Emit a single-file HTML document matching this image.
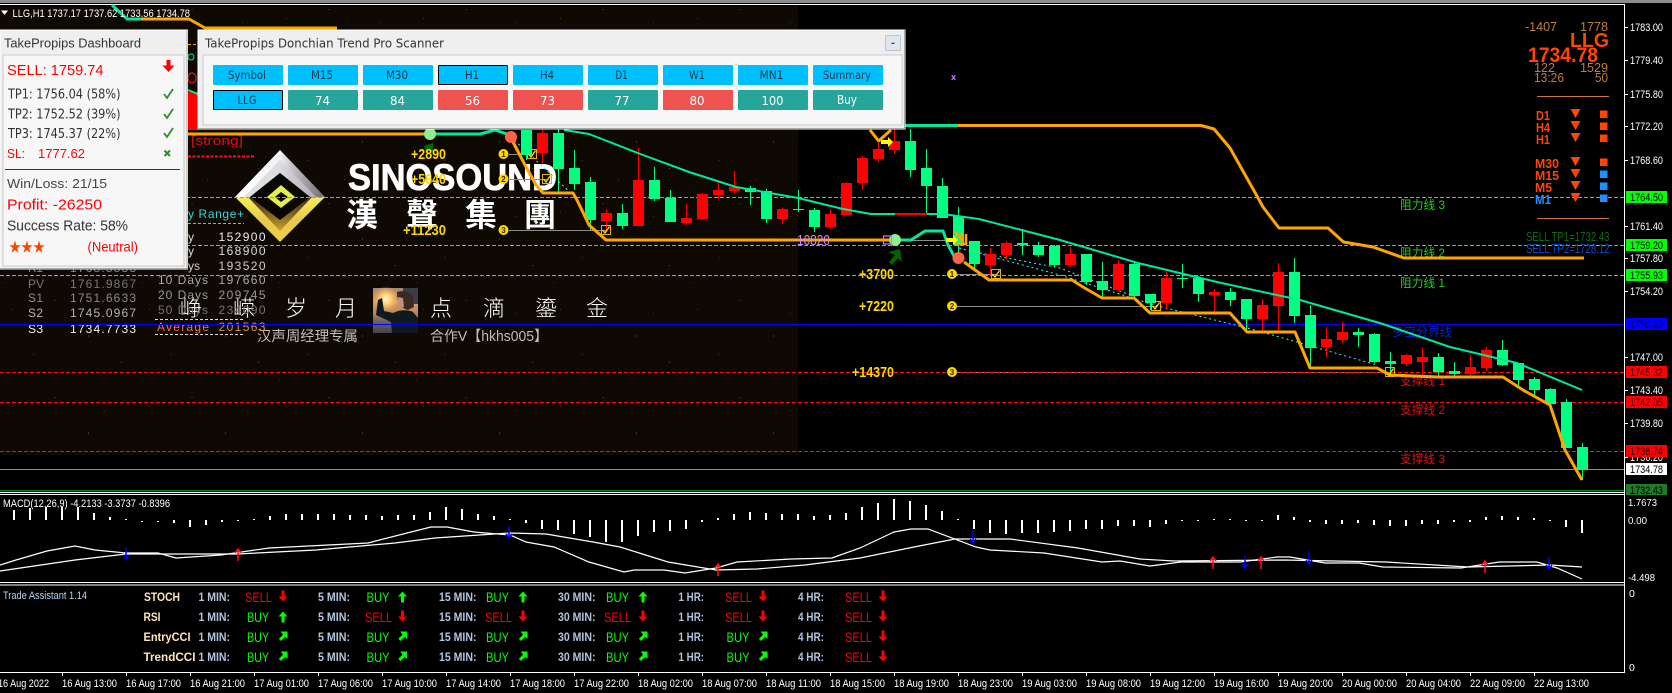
<!DOCTYPE html>
<html><head><meta charset="utf-8"><style>
html,body{margin:0;padding:0;background:#000;width:1672px;height:693px;overflow:hidden}
svg{display:block}
text{font-family:"Liberation Sans","Noto Sans CJK SC",sans-serif}
.d{font-family:"DejaVu Sans","Liberation Sans",sans-serif}
.ax{font-size:11px;fill:#fff}
.lb{font-size:11px;fill:#000}
.info{font-size:13px;fill:#bd7f3c}
.tf{font-size:13px;font-weight:bold;fill:#ff4500}
.y{font-size:15px;font-weight:bold;fill:#ffd700}
.ta{font-size:11.5px;font-weight:bold;fill:#b0c4de}
.nm{font-size:11.5px;font-weight:bold;fill:#ffe4b5}
.gv{font-size:13.5px;fill:#00ff00}
.rv{font-size:13.5px;fill:#ff0000}
.t{font-size:11px;fill:#fff}
.btn{font-size:11.5px;fill:#123a4a}
.num{font-size:12.5px;fill:#fff}
.pn{font-size:13px;fill:#333}
.tb{font-size:12px}
.cn{font-family:"Liberation Sans","Noto Sans CJK SC",sans-serif;font-size:12px}
.bg{font-family:"Noto Sans CJK SC",sans-serif;font-size:22px;fill:#fff;font-weight:300}
.cir{font-size:8px;font-weight:bold;fill:#3a2c00}
</style></head><body>
<svg xmlns="http://www.w3.org/2000/svg" width="1672" height="693" viewBox="0 0 1672 693">
<defs>
<pattern id="sp" width="137" height="97" patternUnits="userSpaceOnUse">
<rect x="12" y="18" width="1" height="1" fill="#4a3a24"/><rect x="54" y="9" width="2" height="1" fill="#33281a"/><rect x="88" y="44" width="1" height="2" fill="#3d3020"/><rect x="121" y="71" width="1" height="1" fill="#5a4a30"/><rect x="33" y="63" width="2" height="1" fill="#2e2416"/><rect x="70" y="82" width="1" height="1" fill="#4a3a24"/><rect x="105" y="22" width="1" height="1" fill="#3a2e1c"/><rect x="5" y="88" width="1" height="1" fill="#33281a"/>
</pattern>
<linearGradient id="up" x1="0" y1="0" x2="1" y2="0"><stop offset="0" stop-color="#fff"/><stop offset=".5" stop-color="#f2f2f4"/><stop offset=".62" stop-color="#c8c6cc"/><stop offset="1" stop-color="#6d6a70"/></linearGradient>
<linearGradient id="lo" x1="0" y1="0" x2="0" y2="1"><stop offset="0" stop-color="#f6ef55"/><stop offset=".5" stop-color="#e8c850"/><stop offset="1" stop-color="#f0d040"/></linearGradient>
<linearGradient id="lo2" x1="0" y1="0" x2="0" y2="1"><stop offset="0" stop-color="#3a2a10"/><stop offset="1" stop-color="#c89c30"/></linearGradient>
<linearGradient id="ph" x1="0" y1="0" x2="0" y2="1"><stop offset="0" stop-color="#a08870"/><stop offset=".3" stop-color="#d8a060"/><stop offset=".55" stop-color="#b88858"/><stop offset=".75" stop-color="#6a6060"/><stop offset="1" stop-color="#44444e"/></linearGradient>
<radialGradient id="sun"><stop offset="0" stop-color="#fff8d8"/><stop offset=".4" stop-color="#ffd070"/><stop offset="1" stop-color="#ffa850" stop-opacity="0"/></radialGradient>
<path id="au" d="M0-5.500L4.500-.5H1.500V5.500H-1.500V-.5H-4.500Z"/>
<path id="ad" d="M0 5.500L4.500 .5H1.500V-5.500H-1.500V.5H-4.500Z"/>
<path id="ane" d="M4.500-4.500V3L2.300 1-2 5-4.200 2.800 0-1.300-2.300-4.500Z"/>
<path id="ck" d="M-3.500 0L-1 3 3.500-3.500" fill="none" stroke="#ffe000" stroke-width="1.3"/>
</defs>

<rect width="1672" height="693" fill="#000"/>
<!-- background photo panel -->
<rect x="0" y="5" width="798" height="450" fill="#0f0903"/>
<rect x="0" y="5" width="798" height="450" fill="url(#sp)"/>
<!-- top frame -->
<rect x="0" y="0" width="1672" height="3" fill="#8c8c8c"/>
<rect x="0" y="4" width="1625" height="1" fill="#fff"/>
<rect x="1624" y="4" width="1" height="669" fill="#fff"/>

<!-- logo -->
<polygon points="280,150 325,197 310,197 280,173 250,197 235,197" fill="url(#up)"/>
<polygon points="280,160 316,197 310,197 280,173 250,197 244,197" fill="#cfcdd2" opacity=".6"/>
<polygon points="235,197 280,242 325,197 310,197 280,220 250,197" fill="url(#lo)"/>
<polygon points="248,197 280,231 312,197 310,197 280,220 250,197" fill="url(#lo2)"/>
<polygon points="280,173 310,197 280,220 250,197" fill="#090703"/>
<polygon points="281,185 295,197 281,208 267,197" fill="#e0f050"/>
<polygon points="281,192 288,197 281,202 275,197" fill="#0b0904"/>
<text x="348" y="190" font-size="37" font-weight="bold" fill="#fff" stroke="#fff" stroke-width=".7" textLength="209" lengthAdjust="spacingAndGlyphs" style="font-family:'Liberation Sans',sans-serif">SINOSOUND</text>
<g font-size="32" font-weight="bold" fill="#fff" text-anchor="middle">
<text x="362" y="226" style="font-family:'Noto Sans CJK TC',sans-serif">漢</text>
<text x="422" y="226" style="font-family:'Noto Sans CJK TC',sans-serif">聲</text>
<text x="481" y="226" style="font-family:'Noto Sans CJK TC',sans-serif">集</text>
<text x="540" y="226" style="font-family:'Noto Sans CJK TC',sans-serif">團</text>
</g>
<g text-anchor="middle">
<text class="bg" x="191" y="316">峥</text><text class="bg" x="244" y="316">嵘</text><text class="bg" x="296" y="316">岁</text><text class="bg" x="346" y="316">月</text>
<text class="bg" x="441" y="316">点</text><text class="bg" x="494" y="316">滴</text><text class="bg" x="546" y="316">鎏</text><text class="bg" x="597" y="316">金</text>
</g>
<text x="257" y="341" font-size="14.4" fill="#bdbdbd" textLength="101" lengthAdjust="spacingAndGlyphs">汉声周经理专属</text>
<text x="430" y="341" font-size="14.4" fill="#bdbdbd" textLength="118" lengthAdjust="spacingAndGlyphs">合作V【hkhs005】</text>
<!-- photo -->
<rect x="373" y="288" width="45" height="45" fill="url(#ph)"/>
<rect x="403" y="288" width="15" height="16" fill="#3c3c48"/>
<circle cx="386" cy="299" r="13" fill="url(#sun)"/>
<path d="M418 333H392L391 322 376 315 378 300 382 298 384 311 393 313 398 311C402 310 410 310 413 312L418 318Z" fill="#101820"/>
<path d="M397 292C402 290 411 291 413 297L414 307 408 310C403 309 399 304 397 299Z" fill="#3a2a24"/>
<path d="M397 297L403 298 404 307 398 306Z" fill="#c09080"/>

<!-- left tables -->
<g class="d tb">
<text x="28" y="288" fill="#777" textLength="16">PV</text><text x="70" y="288" fill="#777" textLength="66">1761.9867</text>
<text x="28" y="302" fill="#8a8a8a" textLength="15">S1</text><text x="70" y="302" fill="#8a8a8a" textLength="66">1751.6633</text>
<text x="28" y="317" fill="#b4b4b4" textLength="15">S2</text><text x="70" y="317" fill="#b4b4b4" textLength="66">1745.0967</text>
<text x="28" y="333" fill="#f0f0f0" textLength="15">S3</text><text x="70" y="333" fill="#f0f0f0" textLength="66">1734.7733</text>
<text x="28" y="272" fill="#888" textLength="15">R1</text><text x="70" y="272" fill="#888" textLength="66">1768.5533</text>
<text x="188" y="218" fill="#30d8d8" textLength="56">y Range+</text>
<text x="188" y="241" fill="#ddd" textLength="8">y</text><text x="218.5" y="241" fill="#eee" textLength="47">152900</text>
<text x="188" y="255" fill="#ddd" textLength="8">y</text><text x="218.5" y="255" fill="#ddd" textLength="47">168900</text>
<text x="188" y="270" fill="#ccc" textLength="12">ys</text><text x="218.5" y="270" fill="#ccc" textLength="47">193520</text>
<text x="158" y="284" fill="#aaa" textLength="50">10 Days</text><text x="218.5" y="284" fill="#aaa" textLength="47">197660</text>
<text x="158" y="299" fill="#999" textLength="50">20 Days</text><text x="218.5" y="299" fill="#999" textLength="47">209745</text>
<text x="158" y="314" fill="#777" textLength="50">50 Days</text><text x="218.5" y="314" fill="#777" textLength="47">234090</text>
<text x="157" y="331" fill="#ff7030" textLength="52">Average</text><text x="218.5" y="331" fill="#e09030" textLength="47">201563</text>
</g>
<path d="M188 223.5H244" stroke="#30d8d8" stroke-dasharray="3 2"/>
<path d="M155 319.5H243M155 334.5H243" stroke="#ddd" stroke-dasharray="3 2"/>

<!-- gray connector lines -->
<path d="M509 154.5H532M509 179.5H547M509 230.5H606M895 240.5H946M957 274.5H996M957 306.5H1156M957 372.5H1390" stroke="#8c8c8c" fill="none" shape-rendering="crispEdges"/>

<!-- horizontal levels -->
<g shape-rendering="crispEdges" fill="none">
<path d="M0 197.5H1624M0 245.5H1624M0 275.5H1624" stroke="#22ee22" stroke-dasharray="4 2"/>
<path d="M0 372.5H1624M0 402.5H1624M0 451.5H1624" stroke="#ff1010" stroke-dasharray="4 2"/>
<path d="M0 324.5H1624" stroke="#0000ff"/>
<path d="M0 469.5H1624" stroke="#8c8c8c"/>
<path d="M0 490.5H1624" stroke="#0a8a20"/>
<path d="M0 492.5H1624M0 494.5H1624M0 582.5H1624M0 585H1624M0 672.5H1625" stroke="#fff"/>
<path d="M188 156.5H255" stroke="#ff1010" stroke-width="2" stroke-dasharray="3 1.5"/>
</g>

<!-- level names -->
<g class="cn">
<text x="1400" y="209" fill="#1fd01f" textLength="45" lengthAdjust="spacingAndGlyphs">阻力线 3</text>
<text x="1400" y="257" fill="#1fd01f" textLength="45" lengthAdjust="spacingAndGlyphs">阻力线 2</text>
<text x="1400" y="287" fill="#1fd01f" textLength="45" lengthAdjust="spacingAndGlyphs">阻力线 1</text>
<text x="1392" y="336" fill="#0a20e0" textLength="60" lengthAdjust="spacingAndGlyphs">多空分界线</text>
<text x="1400" y="385" fill="#e01010" textLength="45" lengthAdjust="spacingAndGlyphs">支撑线 1</text>
<text x="1400" y="414" fill="#e01010" textLength="45" lengthAdjust="spacingAndGlyphs">支撑线 2</text>
<text x="1400" y="463" fill="#e01010" textLength="45" lengthAdjust="spacingAndGlyphs">支撑线 3</text>
</g>

<!-- cyan dashed -->
<path d="M511 137L575 197M959 248L1060 275 1154 305 1255 330 1377 365" fill="none" stroke="#40f0f0" stroke-dasharray="2 3"/>
<path d="M975 252L1060 268 1130 295" fill="none" stroke="#40f0f0" stroke-dasharray="2 3"/>

<!-- candles -->
<g shape-rendering="crispEdges">
<path fill="none" stroke="#00ff80" d="M526.5 130V160M558.5 129V192M574.5 150V190M590.5 177V230M622.5 204V229M654.5 167V201M670.5 190V222M750.5 186V205M766.5 189V223M798.5 190V212M814.5 208V232M910.5 129V177M926.5 149V213M942.5 178V218M958.5 207V255M974.5 241V270M1022.5 229V255M1038.5 242V257M1054.5 245V267M1086.5 254V285M1102.5 262V297M1134.5 263V298M1150.5 294V310M1182.5 264V288M1198.5 276V302M1230.5 288V306M1246.5 299V330M1294.5 258V323M1310.5 305V368M1358.5 328V347M1374.5 333V363M1390.5 352V377M1438.5 353V376M1454.5 362V376M1502.5 340V366M1518.5 363V386M1534.5 377V395M1550.5 388V404M1566.5 399V448M1582.5 443V480"/>
<path fill="#00ff80" d="M521 130h11V155h-11zM553 133h11V169h-11zM569 168h11V184h-11zM585 182h11V220h-11zM617 213h11V226h-11zM649 180h11V199h-11zM665 198h11V222h-11zM745 188h11V192h-11zM761 191h11V219h-11zM793 209h11V210h-11zM809 210h11V227h-11zM905 141h11V170h-11zM921 168h11V186h-11zM937 186h11V218h-11zM953 216h11V245h-11zM969 241h11V264h-11zM1017 243h11V245h-11zM1033 245h11V255h-11zM1049 246h11V265h-11zM1081 254h11V282h-11zM1097 281h11V290h-11zM1129 264h11V296h-11zM1145 294h11V303h-11zM1177 278h11V279h-11zM1193 278h11V294h-11zM1225 292h11V300h-11zM1241 299h11V319h-11zM1289 272h11V316h-11zM1305 315h11V348h-11zM1353 332h11V335h-11zM1369 334h11V362h-11zM1385 361h11V364h-11zM1433 357h11V372h-11zM1449 371h11V374h-11zM1497 350h11V365h-11zM1513 363h11V380h-11zM1529 379h11V390h-11zM1545 389h11V404h-11zM1561 402h11V448h-11zM1577 447h11V470h-11z"/>
<path fill="none" stroke="#ff0000" d="M542.5 129V163M606.5 209V230M638.5 148V226M686.5 204V225M702.5 193V219M718.5 181V199M734.5 171V193M782.5 208V224M830.5 209V229M846.5 182V215M862.5 156V190M878.5 143V162M894.5 129V154M990.5 248V275M1006.5 241V260M1070.5 247V267M1118.5 260V291M1166.5 271V310M1214.5 289V312M1262.5 299V331M1278.5 263V331M1326.5 327V357M1342.5 322V343M1406.5 354V366M1422.5 348V375M1470.5 355V376M1486.5 347V371"/>
<path fill="#ff0000" d="M187 92h11V130h-11zM537 133h11V153h-11zM601 213h11V221h-11zM633 180h11V226h-11zM681 218h11V223h-11zM697 194h11V219h-11zM713 190h11V195h-11zM729 187h11V191h-11zM777 209h11V219h-11zM825 214h11V227h-11zM841 183h11V215h-11zM857 158h11V183h-11zM873 149h11V159h-11zM889 141h11V150h-11zM985 254h11V265h-11zM1001 243h11V255h-11zM1065 254h11V265h-11zM1113 264h11V290h-11zM1161 278h11V303h-11zM1209 292h11V295h-11zM1257 305h11V319h-11zM1273 272h11V306h-11zM1321 339h11V347h-11zM1337 332h11V340h-11zM1401 355h11V364h-11zM1417 357h11V362h-11zM1465 367h11V374h-11zM1481 350h11V368h-11z"/>
</g>

<!-- trend teal -->
<g fill="none" stroke-linejoin="round">
<path d="M564 130L589 134 643 155 689 172 736 187 798 198 843 209 871 214H895" stroke="#00e89c" stroke-width="2"/>
<path d="M895 214H927" stroke="#ff0000" stroke-width="2"/>
<path d="M927 214H943L979 219 1060 240 1138 263 1217 282 1300 300 1383 324 1450 347 1517 363 1582 390" stroke="#00e89c" stroke-width="2"/>
<path d="M112 5L127 19H141" stroke="#00e89c" stroke-width="3"/>
<path d="M430 134H480L495 130 507 134" stroke="#00e89c" stroke-width="3"/>
<path d="M895 240H911L925 231H943L948 245 955 258" stroke="#00e89c" stroke-width="3"/>
<path d="M905 125.5H958" stroke="#00e89c" stroke-width="3"/>
<!-- orange -->
<path d="M141 19H189L205 28H337" stroke="#ffa500" stroke-width="3"/>
<path d="M188 134H430" stroke="#ffa500" stroke-width="3"/>
<path d="M512 140L525 165 536 185 543 193H573L577 200 589 225 606 240H889" stroke="#ffa500" stroke-width="3"/>
<path d="M870 130L878.6 141 891 130" stroke="#ffa500" stroke-width="3"/>
<path d="M964 262L989 280H1072L1083 287 1102 298H1134L1150 313H1230L1247 332H1295L1310 368H1377L1390 375 1413 376 1437 377H1503L1523 390 1550 405 1565 450 1582 480" stroke="#ffa500" stroke-width="3"/>
<path d="M958 125.5H1201L1214 129 1230 148 1257.5 197 1263 207 1279 228H1328L1343.5 242 1373 247 1404 258H1584" stroke="#ffa500" stroke-width="3"/>
</g>

<!-- markers -->
<circle cx="430" cy="134" r="6" fill="#90ee90"/>
<path d="M424 146L433 143V152L430 149 426 153Z" fill="#006400"/>
<circle cx="511" cy="137" r="6" fill="#ff6347"/>
<circle cx="895" cy="240" r="6" fill="#90ee90"/>
<rect x="883.5" y="236" width="8" height="8" fill="none" stroke="#d070ff" stroke-width="1.2"/>
<path d="M888 252L900 249 902 262 898 258 892 265 889 262 895 255Z" fill="#006400"/>
<circle cx="958.5" cy="258" r="6" fill="#ff6347"/>
<path d="M881 140H888V137L893 142 888 147V144H881Z" fill="#ffff00"/>
<path d="M946 238H953V235L958 240 953 245V242H946Z" fill="#ffff00"/>
<path d="M955 232L962 240 961 233M955 244H966V234" fill="none" stroke="#ffa500" stroke-width="2.5"/>
<text x="951" y="80" font-size="9" font-weight="bold" fill="#d080ff">x</text>
<!-- gold circles -->
<g fill="#ffd700">
<circle cx="503.5" cy="154" r="5"/><circle cx="503.5" cy="179" r="5"/><circle cx="503.5" cy="230" r="5"/>
<circle cx="952" cy="274" r="5"/><circle cx="952" cy="306" r="5"/><circle cx="952" cy="372" r="5"/>
</g>
<g text-anchor="middle">
<text class="cir" x="503.5" y="157">1</text><text class="cir" x="503.5" y="182">2</text><text class="cir" x="503.5" y="233">3</text>
<text class="cir" x="952" y="277">1</text><text class="cir" x="952" y="309">2</text><text class="cir" x="952" y="375">3</text>
</g>
<!-- check boxes -->
<g fill="none" stroke="#e8b000" stroke-width="1">
<rect x="527.5" y="149.5" width="9" height="9"/><rect x="542.5" y="174.5" width="9" height="9"/><rect x="601.5" y="225.5" width="9" height="9"/><rect x="991.5" y="269.5" width="9" height="9"/><rect x="1151.5" y="301.5" width="9" height="9"/><rect x="1385.5" y="367.5" width="9" height="9"/>
</g>
<use href="#ck" x="532" y="154"/><use href="#ck" x="547" y="179"/><use href="#ck" x="606" y="230"/><use href="#ck" x="996" y="274"/><use href="#ck" x="1156" y="306"/><use href="#ck" x="1390" y="372"/>

<!-- profit labels -->
<g class="y">
<text x="411" y="159" textLength="35" lengthAdjust="spacingAndGlyphs">+2890</text>
<text x="411" y="184" textLength="35" lengthAdjust="spacingAndGlyphs">+5640</text>
<text x="403" y="235" textLength="43" lengthAdjust="spacingAndGlyphs">+11230</text>
<text x="859" y="279" textLength="35" lengthAdjust="spacingAndGlyphs">+3700</text>
<text x="859" y="311" textLength="35" lengthAdjust="spacingAndGlyphs">+7220</text>
<text x="852" y="377" textLength="42" lengthAdjust="spacingAndGlyphs">+14370</text>
</g>
<text x="793" y="245" font-size="15" fill="#d088ff" textLength="37" lengthAdjust="spacingAndGlyphs">-10820</text>
<text x="191" y="145" font-size="13" fill="#d81010" textLength="52" lengthAdjust="spacingAndGlyphs">[strong]</text>
<path d="M188 44.5H198" stroke="#ffa500" stroke-dasharray="3 2"/>
<circle cx="191" cy="57" r="3" fill="none" stroke="#00e89c"/>
<ellipse cx="192" cy="78" rx="4" ry="5" fill="none" stroke="#ff2020"/>
<path d="M188 90L198 94" stroke="#00e89c" stroke-width="2"/>

<!-- top status -->
<path d="M1 10.5H8L4.5 15Z" fill="#fff"/>
<text x="12.5" y="17" class="t" textLength="177.5" lengthAdjust="spacingAndGlyphs">LLG,H1  1737.17 1737.62 1733.56 1734.78</text>

<!-- right info -->
<g class="info">
<text x="1525" y="31" textLength="32" lengthAdjust="spacingAndGlyphs">-1407</text>
<text x="1580" y="31" textLength="28" lengthAdjust="spacingAndGlyphs">1778</text>
<text x="1534" y="72" textLength="21" lengthAdjust="spacingAndGlyphs">122</text>
<text x="1580" y="72" textLength="28" lengthAdjust="spacingAndGlyphs">1529</text>
<text x="1534" y="82" textLength="30" lengthAdjust="spacingAndGlyphs">13:26</text>
<text x="1595" y="82" textLength="13" lengthAdjust="spacingAndGlyphs">50</text>
</g>
<text x="1570" y="47" font-size="20" font-weight="bold" fill="#ff4500" textLength="39" lengthAdjust="spacingAndGlyphs">LLG</text>
<text x="1528" y="62" font-size="21" font-weight="bold" fill="#ff4500" textLength="70" lengthAdjust="spacingAndGlyphs">1734.78</text>
<path d="M1537 96.5H1609M1537 218.5H1609" stroke="#c8743c" shape-rendering="crispEdges"/>
<g class="tf">
<text x="1536" y="120" textLength="14" lengthAdjust="spacingAndGlyphs">D1</text>
<text x="1536" y="132" textLength="14" lengthAdjust="spacingAndGlyphs">H4</text>
<text x="1536" y="144" textLength="14" lengthAdjust="spacingAndGlyphs">H1</text>
<text x="1535" y="168" textLength="24" lengthAdjust="spacingAndGlyphs">M30</text>
<text x="1535" y="180" textLength="24" lengthAdjust="spacingAndGlyphs">M15</text>
<text x="1535" y="192" textLength="17" lengthAdjust="spacingAndGlyphs">M5</text>
<text x="1535" y="204" textLength="16" lengthAdjust="spacingAndGlyphs" style="fill:#1e90ff">M1</text>
</g>
<path fill="#ff4500" d="M1570.5 109h10l-5 9zM1570.5 121h10l-5 9zM1570.5 133h10l-5 9zM1570.5 157h10l-5 9zM1570.5 169h10l-5 9zM1570.5 181h10l-5 9zM1570.5 193h10l-5 9z"/>
<path fill="#ff4500" d="M1600 110.5h7.5v7.5h-7.5zM1600 122.5h7.5v7.5h-7.5zM1600 134.5h7.5v7.5h-7.5zM1600 158.5h7.5v7.5h-7.5z"/>
<path fill="#1e90ff" d="M1600 170.5h7.5v7.5h-7.5zM1600 182.5h7.5v7.5h-7.5zM1600 194.5h7.5v7.5h-7.5z"/>
<text x="1526" y="241" font-size="13" fill="#0d6a14" textLength="83.5" lengthAdjust="spacingAndGlyphs">SELL TP1=1732.43</text>
<text x="1526" y="253" font-size="13" fill="#0c4ac8" textLength="83.5" lengthAdjust="spacingAndGlyphs">SELL TP2=1728.12</text>

<!-- price axis -->
<path stroke="#fff" shape-rendering="crispEdges" d="M1625 27.5h3M1625 60.5h3M1625 94.5h3M1625 126.5h3M1625 160.5h3M1625 226.5h3M1625 258.5h3M1625 291.5h3M1625 357.5h3M1625 390.5h3M1625 423.5h3M1625 457.5h3"/>
<g class="ax">
<text x="1630" y="31" textLength="33" lengthAdjust="spacingAndGlyphs">1783.00</text>
<text x="1630" y="64" textLength="33" lengthAdjust="spacingAndGlyphs">1779.40</text>
<text x="1630" y="98" textLength="33" lengthAdjust="spacingAndGlyphs">1775.80</text>
<text x="1630" y="130" textLength="33" lengthAdjust="spacingAndGlyphs">1772.20</text>
<text x="1630" y="164" textLength="33" lengthAdjust="spacingAndGlyphs">1768.60</text>
<text x="1630" y="230" textLength="33" lengthAdjust="spacingAndGlyphs">1761.40</text>
<text x="1630" y="262" textLength="33" lengthAdjust="spacingAndGlyphs">1757.80</text>
<text x="1630" y="295" textLength="33" lengthAdjust="spacingAndGlyphs">1754.20</text>
<text x="1630" y="361" textLength="33" lengthAdjust="spacingAndGlyphs">1747.00</text>
<text x="1630" y="394" textLength="33" lengthAdjust="spacingAndGlyphs">1743.40</text>
<text x="1630" y="427" textLength="33" lengthAdjust="spacingAndGlyphs">1739.80</text>
<text x="1630" y="461" textLength="33" lengthAdjust="spacingAndGlyphs">1736.20</text>
</g>
<g shape-rendering="crispEdges">
<rect x="1626" y="191" width="41" height="12" fill="#00ff00"/>
<rect x="1626" y="239" width="41" height="12" fill="#00ff00"/>
<rect x="1626" y="269" width="41" height="12" fill="#00ff00"/>
<rect x="1626" y="318" width="41" height="12" fill="#0000ff"/>
<rect x="1626" y="366" width="41" height="12" fill="#ff0000"/>
<rect x="1626" y="396" width="41" height="12" fill="#ff0000"/>
<rect x="1626" y="445" width="41" height="12" fill="#ff0000"/>
<rect x="1626" y="463" width="41" height="12" fill="#fff"/>
<rect x="1626" y="484" width="41" height="11" fill="#1f7a2a"/>
</g>
<g class="lb">
<text x="1630" y="201" textLength="33" lengthAdjust="spacingAndGlyphs">1764.50</text>
<text x="1630" y="249" textLength="33" lengthAdjust="spacingAndGlyphs">1759.20</text>
<text x="1630" y="279" textLength="33" lengthAdjust="spacingAndGlyphs">1755.93</text>
<text x="1630" y="328" textLength="33" lengthAdjust="spacingAndGlyphs" style="fill:#000040">1750.62</text>
<text x="1630" y="376" textLength="33" lengthAdjust="spacingAndGlyphs" style="fill:#200000">1745.32</text>
<text x="1630" y="406" textLength="33" lengthAdjust="spacingAndGlyphs" style="fill:#200000">1742.05</text>
<text x="1630" y="455" textLength="33" lengthAdjust="spacingAndGlyphs" style="fill:#200000">1736.74</text>
<text x="1630" y="473" textLength="33" lengthAdjust="spacingAndGlyphs">1734.78</text>
<text x="1630" y="494" textLength="33" lengthAdjust="spacingAndGlyphs">1732.43</text>
</g>

<!-- MACD -->
<text x="3" y="507" class="t" textLength="167" lengthAdjust="spacingAndGlyphs">MACD(12,26,9) -4.2133 -3.3737 -0.8396</text>
<path stroke="#fff" stroke-width="2" fill="none" shape-rendering="crispEdges" d="M14 520V510M30 520V508M46 520V507M62 520V507M78 520V507M94 520V513M110 520V517M126 520V519M142 521V522M158 521V522M174 520V523M190 520V527M206 520V525M222 520V522M238 520V521M254 520V519M270 520V516M286 520V514M302 520V514M318 520V514M334 520V514M350 520V515M366 520V515M382 520V516M398 520V515M414 520V515M430 520V512M446 520V507M462 520V509M478 520V514M494 520V516M510 520V519M526 520V523M542 520V529M558 520V530M574 520V534M590 520V537M606 520V542M622 520V542M638 520V536M654 520V532M670 520V531M686 520V529M702 520V522M718 520V518M734 520V514M750 520V512M766 520V513M782 520V514M798 520V514M814 520V516M830 520V515M846 520V513M862 520V507M878 520V503M894 520V499M910 520V501M926 520V505M942 520V511M958 520V519M974 520V529M990 520V533M1006 520V534M1022 520V533M1038 520V533M1054 520V532M1070 520V531M1086 520V529M1102 520V529M1118 520V526M1134 520V526M1150 520V527M1166 520V524M1182 520V521M1198 520V521M1214 519V520M1230 519V520M1246 520V521M1262 520V521M1278 520V515M1294 520V517M1310 520V522M1326 520V524M1342 520V524M1358 520V523M1374 520V525M1390 520V526M1406 520V526M1422 520V524M1438 520V524M1454 520V522M1470 520V522M1486 520V517M1502 520V516M1518 520V517M1534 520V518M1550 520V521M1566 520V527M1582 520V533"/>
<g fill="none" stroke="#fff" stroke-width="1.2">
<path d="M0 565L16 560 47 551 75 546 95 550 126 553H158L176 558 221 555 269 548 368 543 411 532 431 527H447L474 532 510 535 526 542 554 547 589 562 624 572 634 570H664L685 573 716 568 737 562 791 559 832 558 860 548 894 532 911 529H928L976 547 990 550 1044 553 1102 562 1120 561 1150 566 1181 562H1240L1277 557H1290L1325 563H1359L1383 567 1461 568 1499 562H1537L1557 568 1582 579"/>
<path d="M0 571L75 560 126 554H237L316 550 395 543 435 538 494 534 510 533 546 534 593 542 620 547 668 562 716 570 757 569 805 565 860 558 914 547 955 539H1010L1078 548 1140 559 1174 561 1284 560 1386 562 1468 567 1550 565 1582 567"/>
</g>
<g fill="none" stroke-width="1.5">
<g stroke="#0000ff"><path d="M126 547V559M123 555L126 559 129 555"/><path d="M509 526V538M506 534L509 538 512 534"/><path d="M973 531V543M970 539L973 543 976 539"/><path d="M1245 556V568M1242 564L1245 568 1248 564"/><path d="M1309 552V564M1306 560L1309 564 1312 560"/><path d="M1549 557V569M1546 565L1549 569 1552 565"/></g>
<g stroke="#ff1010"><path d="M238 561V549M235 553L238 549 241 553"/><path d="M718 576V564M715 568L718 564 721 568"/><path d="M1213 569V557M1210 561L1213 557 1216 561"/><path d="M1261 569V557M1258 561L1261 557 1264 561"/><path d="M1485 573V561M1482 565L1485 561 1488 565"/></g>
</g>
<g class="ax" style="font-size:10.5px">
<text x="1628" y="506" textLength="29" lengthAdjust="spacingAndGlyphs">1.7673</text>
<text x="1628" y="524" textLength="19" lengthAdjust="spacingAndGlyphs">0.00</text>
<text x="1628" y="581" textLength="27" lengthAdjust="spacingAndGlyphs">-4.498</text>
<text x="1629" y="597">0</text>
<text x="1629" y="671">0</text>
</g>

<!-- Trade assistant -->
<text x="3" y="599" font-size="11" fill="#b0d4f0" textLength="84" lengthAdjust="spacingAndGlyphs">Trade Assistant 1.14</text>
<g class="nm">
<text x="144" y="601" textLength="36" lengthAdjust="spacingAndGlyphs">STOCH</text>
<text x="143.5" y="621" textLength="17" lengthAdjust="spacingAndGlyphs">RSI</text>
<text x="143.5" y="641" textLength="47" lengthAdjust="spacingAndGlyphs">EntryCCI</text>
<text x="143.5" y="661" textLength="52" lengthAdjust="spacingAndGlyphs">TrendCCI</text>
</g>
<g class="ta">
<text x="198.5" y="601" textLength="31.5" lengthAdjust="spacingAndGlyphs">1 MIN:</text><text x="198.5" y="621" textLength="31.5" lengthAdjust="spacingAndGlyphs">1 MIN:</text><text x="198.5" y="641" textLength="31.5" lengthAdjust="spacingAndGlyphs">1 MIN:</text><text x="198.5" y="661" textLength="31.5" lengthAdjust="spacingAndGlyphs">1 MIN:</text>
<text x="318" y="601" textLength="32" lengthAdjust="spacingAndGlyphs">5 MIN:</text><text x="318" y="621" textLength="32" lengthAdjust="spacingAndGlyphs">5 MIN:</text><text x="318" y="641" textLength="32" lengthAdjust="spacingAndGlyphs">5 MIN:</text><text x="318" y="661" textLength="32" lengthAdjust="spacingAndGlyphs">5 MIN:</text>
<text x="439" y="601" textLength="37.5" lengthAdjust="spacingAndGlyphs">15 MIN:</text><text x="439" y="621" textLength="37.5" lengthAdjust="spacingAndGlyphs">15 MIN:</text><text x="439" y="641" textLength="37.5" lengthAdjust="spacingAndGlyphs">15 MIN:</text><text x="439" y="661" textLength="37.5" lengthAdjust="spacingAndGlyphs">15 MIN:</text>
<text x="558" y="601" textLength="37.5" lengthAdjust="spacingAndGlyphs">30 MIN:</text><text x="558" y="621" textLength="37.5" lengthAdjust="spacingAndGlyphs">30 MIN:</text><text x="558" y="641" textLength="37.5" lengthAdjust="spacingAndGlyphs">30 MIN:</text><text x="558" y="661" textLength="37.5" lengthAdjust="spacingAndGlyphs">30 MIN:</text>
<text x="678.5" y="601" textLength="25.5" lengthAdjust="spacingAndGlyphs">1 HR:</text><text x="678.5" y="621" textLength="25.5" lengthAdjust="spacingAndGlyphs">1 HR:</text><text x="678.5" y="641" textLength="25.5" lengthAdjust="spacingAndGlyphs">1 HR:</text><text x="678.5" y="661" textLength="25.5" lengthAdjust="spacingAndGlyphs">1 HR:</text>
<text x="798" y="601" textLength="26" lengthAdjust="spacingAndGlyphs">4 HR:</text><text x="798" y="621" textLength="26" lengthAdjust="spacingAndGlyphs">4 HR:</text><text x="798" y="641" textLength="26" lengthAdjust="spacingAndGlyphs">4 HR:</text><text x="798" y="661" textLength="26" lengthAdjust="spacingAndGlyphs">4 HR:</text>
</g>
<g class="rv">
<text x="245" y="602" textLength="27" lengthAdjust="spacingAndGlyphs">SELL</text>
<text x="365" y="622" textLength="27" lengthAdjust="spacingAndGlyphs">SELL</text>
<text x="485" y="622" textLength="27" lengthAdjust="spacingAndGlyphs">SELL</text>
<text x="604" y="622" textLength="27" lengthAdjust="spacingAndGlyphs">SELL</text>
<text x="725" y="602" textLength="27" lengthAdjust="spacingAndGlyphs">SELL</text>
<text x="725" y="622" textLength="27" lengthAdjust="spacingAndGlyphs">SELL</text>
<text x="845" y="602" textLength="27" lengthAdjust="spacingAndGlyphs">SELL</text>
<text x="845" y="622" textLength="27" lengthAdjust="spacingAndGlyphs">SELL</text>
<text x="845" y="642" textLength="27" lengthAdjust="spacingAndGlyphs">SELL</text>
<text x="845" y="662" textLength="27" lengthAdjust="spacingAndGlyphs">SELL</text>
</g>
<g class="gv">
<text x="247" y="622" textLength="22" lengthAdjust="spacingAndGlyphs">BUY</text><text x="247" y="642" textLength="22" lengthAdjust="spacingAndGlyphs">BUY</text><text x="247" y="662" textLength="22" lengthAdjust="spacingAndGlyphs">BUY</text>
<text x="366.5" y="602" textLength="23" lengthAdjust="spacingAndGlyphs">BUY</text><text x="366.5" y="642" textLength="23" lengthAdjust="spacingAndGlyphs">BUY</text><text x="366.5" y="662" textLength="23" lengthAdjust="spacingAndGlyphs">BUY</text>
<text x="486" y="602" textLength="23" lengthAdjust="spacingAndGlyphs">BUY</text><text x="486" y="642" textLength="23" lengthAdjust="spacingAndGlyphs">BUY</text><text x="486" y="662" textLength="23" lengthAdjust="spacingAndGlyphs">BUY</text>
<text x="606" y="602" textLength="23" lengthAdjust="spacingAndGlyphs">BUY</text><text x="606" y="642" textLength="23" lengthAdjust="spacingAndGlyphs">BUY</text><text x="606" y="662" textLength="23" lengthAdjust="spacingAndGlyphs">BUY</text>
<text x="726.5" y="642" textLength="23" lengthAdjust="spacingAndGlyphs">BUY</text><text x="726.5" y="662" textLength="23" lengthAdjust="spacingAndGlyphs">BUY</text>
</g>
<g fill="#ff0000">
<use href="#ad" x="283" y="596"/><use href="#ad" x="402.5" y="616"/><use href="#ad" x="523" y="616"/><use href="#ad" x="643" y="616"/><use href="#ad" x="763" y="596"/><use href="#ad" x="763" y="616"/>
<use href="#ad" x="883" y="596"/><use href="#ad" x="883" y="616"/><use href="#ad" x="883" y="636"/><use href="#ad" x="883" y="656"/>
</g>
<g fill="#00ff00">
<use href="#au" x="283" y="617"/><use href="#au" x="402.5" y="597"/><use href="#au" x="523" y="597"/><use href="#au" x="643" y="597"/>
<use href="#ane" x="283" y="636"/><use href="#ane" x="283" y="656"/><use href="#ane" x="402.5" y="636"/><use href="#ane" x="402.5" y="656"/><use href="#ane" x="523" y="636"/><use href="#ane" x="523" y="656"/><use href="#ane" x="643" y="636"/><use href="#ane" x="643" y="656"/><use href="#ane" x="763" y="636"/><use href="#ane" x="763" y="656"/>
</g>

<!-- time axis -->
<path stroke="#fff" shape-rendering="crispEdges" d="M62.5 673v3M126.5 673v3M190.5 673v3M254.5 673v3M318.5 673v3M382.5 673v3M446.5 673v3M510.5 673v3M574.5 673v3M638.5 673v3M702.5 673v3M766.5 673v3M830.5 673v3M894.5 673v3M958.5 673v3M1022.5 673v3M1086.5 673v3M1150.5 673v3M1214.5 673v3M1278.5 673v3M1342.5 673v3M1406.5 673v3M1470.5 673v3M1534.5 673v3"/>
<g class="t">
<text x="-2" y="687" textLength="51" lengthAdjust="spacingAndGlyphs">16 Aug 2022</text>
<text x="62" y="687" textLength="55" lengthAdjust="spacingAndGlyphs">16 Aug 13:00</text>
<text x="126" y="687" textLength="55" lengthAdjust="spacingAndGlyphs">16 Aug 17:00</text>
<text x="190" y="687" textLength="55" lengthAdjust="spacingAndGlyphs">16 Aug 21:00</text>
<text x="254" y="687" textLength="55" lengthAdjust="spacingAndGlyphs">17 Aug 01:00</text>
<text x="318" y="687" textLength="55" lengthAdjust="spacingAndGlyphs">17 Aug 06:00</text>
<text x="382" y="687" textLength="55" lengthAdjust="spacingAndGlyphs">17 Aug 10:00</text>
<text x="446" y="687" textLength="55" lengthAdjust="spacingAndGlyphs">17 Aug 14:00</text>
<text x="510" y="687" textLength="55" lengthAdjust="spacingAndGlyphs">17 Aug 18:00</text>
<text x="574" y="687" textLength="55" lengthAdjust="spacingAndGlyphs">17 Aug 22:00</text>
<text x="638" y="687" textLength="55" lengthAdjust="spacingAndGlyphs">18 Aug 02:00</text>
<text x="702" y="687" textLength="55" lengthAdjust="spacingAndGlyphs">18 Aug 07:00</text>
<text x="766" y="687" textLength="55" lengthAdjust="spacingAndGlyphs">18 Aug 11:00</text>
<text x="830" y="687" textLength="55" lengthAdjust="spacingAndGlyphs">18 Aug 15:00</text>
<text x="894" y="687" textLength="55" lengthAdjust="spacingAndGlyphs">18 Aug 19:00</text>
<text x="958" y="687" textLength="55" lengthAdjust="spacingAndGlyphs">18 Aug 23:00</text>
<text x="1022" y="687" textLength="55" lengthAdjust="spacingAndGlyphs">19 Aug 03:00</text>
<text x="1086" y="687" textLength="55" lengthAdjust="spacingAndGlyphs">19 Aug 08:00</text>
<text x="1150" y="687" textLength="55" lengthAdjust="spacingAndGlyphs">19 Aug 12:00</text>
<text x="1214" y="687" textLength="55" lengthAdjust="spacingAndGlyphs">19 Aug 16:00</text>
<text x="1278" y="687" textLength="55" lengthAdjust="spacingAndGlyphs">19 Aug 20:00</text>
<text x="1342" y="687" textLength="55" lengthAdjust="spacingAndGlyphs">20 Aug 00:00</text>
<text x="1406" y="687" textLength="55" lengthAdjust="spacingAndGlyphs">20 Aug 04:00</text>
<text x="1470" y="687" textLength="55" lengthAdjust="spacingAndGlyphs">22 Aug 09:00</text>
<text x="1534" y="687" textLength="55" lengthAdjust="spacingAndGlyphs">22 Aug 13:00</text>
</g>

<!-- Dashboard panel -->
<rect x="0" y="30" width="187.5" height="239" fill="#efefef" stroke="#fff" stroke-width="1"/>
<rect x="186.5" y="30" width="1" height="239" fill="#aaa"/>
<rect x="0" y="268" width="188" height="1" fill="#aaa"/>
<rect x="3" y="55" width="181" height="211" fill="#f7f7f7" stroke="#c8c8c8"/>
<g class="d">
<text x="4" y="47.5" font-size="12.5" fill="#333" textLength="137" lengthAdjust="spacingAndGlyphs">TakePropips Dashboard</text>
<text x="7" y="75" font-size="15" fill="#ff0000" textLength="96.5" lengthAdjust="spacingAndGlyphs">SELL: 1759.74</text>
<text class="d pn" x="8" y="98.5" textLength="112.5" lengthAdjust="spacingAndGlyphs">TP1: 1756.04 (58%)</text>
<text class="d pn" x="8" y="118.5" textLength="112.5" lengthAdjust="spacingAndGlyphs">TP2: 1752.52 (39%)</text>
<text class="d pn" x="8" y="138" textLength="112.5" lengthAdjust="spacingAndGlyphs">TP3: 1745.37 (22%)</text>
<text x="7" y="158" font-size="13" fill="#ff0000" textLength="18" lengthAdjust="spacingAndGlyphs">SL:</text>
<text x="38" y="158" font-size="13" fill="#ff0000" textLength="47" lengthAdjust="spacingAndGlyphs">1777.62</text>
<text x="7" y="188" font-size="13" fill="#444" textLength="100" lengthAdjust="spacingAndGlyphs">Win/Loss: 21/15</text>
<text x="7" y="209.5" font-size="15" fill="#ff0000" textLength="95" lengthAdjust="spacingAndGlyphs">Profit: -26250</text>
<text x="7" y="230.5" font-size="15" fill="#333" textLength="121" lengthAdjust="spacingAndGlyphs">Success Rate: 58%</text>
<text x="9" y="252" font-size="14" fill="#ff4500" textLength="36" lengthAdjust="spacingAndGlyphs">★★★</text>
<text x="87.5" y="251.5" font-size="14" fill="#ff0000" textLength="50.5" lengthAdjust="spacingAndGlyphs">(Neutral)</text>
</g>
<path d="M166.5 60h4v5.5h4l-6 6.5-6-6.5h4z" fill="#ff0000"/>
<g fill="none" stroke="#2e8b2e" stroke-width="1.8"><path d="M164 94L167 98 173 89"/><path d="M164 114L167 118 173 109"/><path d="M164 133L167 137 173 128"/></g>
<path d="M164.5 150.5L170 156M170 150.5L164.5 156" stroke="#2e8b2e" stroke-width="2"/>
<path d="M5 169.5H180" stroke="#333" shape-rendering="crispEdges"/>

<!-- Scanner panel -->
<rect x="198" y="30" width="707" height="99" fill="#efefef" stroke="#fff"/>
<rect x="904" y="30" width="1" height="99" fill="#aaa"/>
<rect x="198" y="128" width="707" height="1" fill="#aaa"/>
<rect x="203" y="55" width="699" height="70" fill="#f7f7f7" stroke="#c8c8c8"/>
<text class="d" x="205" y="47.5" font-size="12.5" fill="#333" textLength="239" lengthAdjust="spacingAndGlyphs">TakePropips Donchian Trend Pro Scanner</text>
<rect x="885.5" y="35.5" width="15" height="15" rx="1" fill="#dfe6ee" stroke="#b8c4d0"/>
<text x="893" y="46" text-anchor="middle" font-size="11" font-weight="bold" fill="#333">-</text>
<g fill="#00bfff">
<rect x="213" y="65" width="70" height="20" rx="1"/><rect x="288" y="65" width="70" height="20" rx="1"/><rect x="363" y="65" width="70" height="20" rx="1"/>
<rect x="438.5" y="65.5" width="69" height="19" rx="1" stroke="#000"/><rect x="513" y="65" width="70" height="20" rx="1"/><rect x="588" y="65" width="70" height="20" rx="1"/><rect x="663" y="65" width="70" height="20" rx="1"/><rect x="738" y="65" width="70" height="20" rx="1"/><rect x="813" y="65" width="70" height="20" rx="1"/>
<rect x="213.5" y="90.5" width="69" height="19" rx="1" stroke="#000"/>
</g>
<rect x="288" y="90" width="70" height="20" rx="1" fill="#26a69a"/><rect x="363" y="90" width="70" height="20" rx="1" fill="#26a69a"/>
<rect x="438" y="90" width="70" height="20" rx="1" fill="#ef5350"/><rect x="513" y="90" width="70" height="20" rx="1" fill="#ef5350"/>
<rect x="588" y="90" width="70" height="20" rx="1" fill="#26a69a"/><rect x="663" y="90" width="70" height="20" rx="1" fill="#ef5350"/>
<rect x="738" y="90" width="70" height="20" rx="1" fill="#26a69a"/><rect x="813" y="90" width="70" height="20" rx="1" fill="#26a69a"/>
<g text-anchor="middle" class="d">
<text class="d btn" x="247" y="79" textLength="38" lengthAdjust="spacingAndGlyphs">Symbol</text>
<text class="d btn" x="322" y="79" textLength="22" lengthAdjust="spacingAndGlyphs">M15</text>
<text class="d btn" x="397" y="79" textLength="22" lengthAdjust="spacingAndGlyphs">M30</text>
<text class="d btn" x="472" y="79" textLength="14" lengthAdjust="spacingAndGlyphs">H1</text>
<text class="d btn" x="547" y="79" textLength="14" lengthAdjust="spacingAndGlyphs">H4</text>
<text class="d btn" x="621.5" y="79" textLength="12" lengthAdjust="spacingAndGlyphs">D1</text>
<text class="d btn" x="697" y="79" textLength="16" lengthAdjust="spacingAndGlyphs">W1</text>
<text class="d btn" x="771.5" y="79" textLength="24" lengthAdjust="spacingAndGlyphs">MN1</text>
<text class="d btn" x="847" y="79" textLength="48" lengthAdjust="spacingAndGlyphs">Summary</text>
<text class="d btn" x="247" y="104" textLength="19" lengthAdjust="spacingAndGlyphs">LLG</text>
<text class="d num" x="322.5" y="105" textLength="15" lengthAdjust="spacingAndGlyphs">74</text>
<text class="d num" x="397.5" y="105" textLength="15" lengthAdjust="spacingAndGlyphs">84</text>
<text class="d num" x="472.5" y="105" textLength="15" lengthAdjust="spacingAndGlyphs">56</text>
<text class="d num" x="547.5" y="105" textLength="15" lengthAdjust="spacingAndGlyphs">73</text>
<text class="d num" x="622" y="105" textLength="15" lengthAdjust="spacingAndGlyphs">77</text>
<text class="d num" x="697" y="105" textLength="15" lengthAdjust="spacingAndGlyphs">80</text>
<text class="d num" x="772.5" y="105" textLength="22" lengthAdjust="spacingAndGlyphs">100</text>
<text class="d num" x="847" y="104" textLength="20" lengthAdjust="spacingAndGlyphs">Buy</text>
</g>
</svg>
</body></html>
